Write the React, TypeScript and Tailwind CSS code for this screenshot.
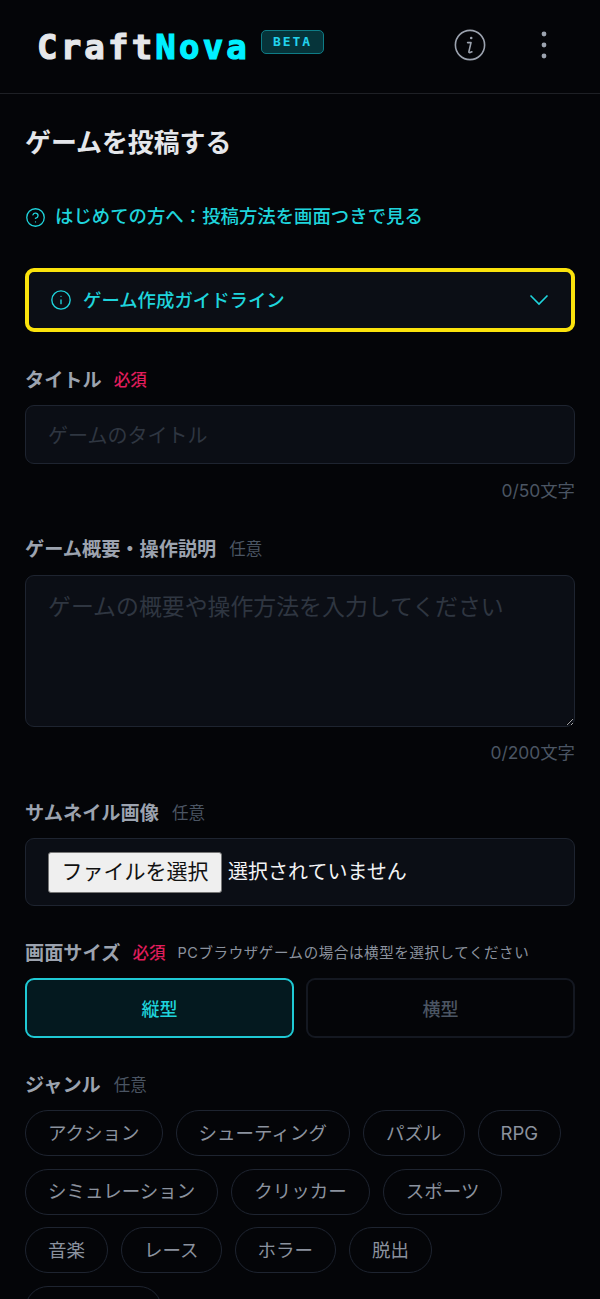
/**
 * Game submission form for CraftNova, mobile layout.
 */

import { CircleHelp, Info } from 'lucide-react';

const FONT = 'font-["Inter","Noto_Sans_CJK_JP",sans-serif]';

const GENRES = [
  'アクション',
  'シューティング',
  'パズル',
  'RPG',
  'シミュレーション',
  'クリッカー',
  'スポーツ',
  '音楽',
  'レース',
  'ホラー',
  '脱出',
  'カジュアル',
];

function FieldLabel({
  text,
  required,
  hint,
  className,
}: {
  text: string;
  required?: boolean;
  hint?: string;
  className: string;
}) {
  return (
    <div className={`flex items-center h-[26px] ${className}`}>
      <span className="text-[19.2px] font-bold text-[#9ca3af]">{text}</span>
      <span className={`text-[16.5px] ${required ? 'ml-[12px] text-[#e11d5c] font-medium' : 'ml-[13px] text-[#4b5563]'}`}>
        {required ? '必須' : '任意'}
      </span>
      {hint && <span className="ml-[12px] text-[14.5px] tracking-[0.6px] text-[#8b929e]">{hint}</span>}
    </div>
  );
}

function Counter({ text, className }: { text: string; className: string }) {
  return <div className={`h-[24px] leading-[24px] text-right text-[17.4px] text-[#4b5563] ${className}`}>{text}</div>;
}

export default function App() {
  return (
    <div className={`h-[1299px] overflow-hidden bg-[#040508] ${FONT}`}>
      {/* Header */}
      <header className="flex items-center h-[94px] border-b border-[#1e2025] pl-[37px] pr-[53px]">
        <div className="flex items-start">
          <span className='font-["DejaVu_Sans_Mono",monospace] text-[34px] leading-[36px] font-bold tracking-[3.2px] mt-[1px] [-webkit-text-stroke:1.2px_currentColor]'>
            <span className="text-[#e5e7eb]">Craft</span>
            <span className="text-[#00f0ff]">Nova</span>
          </span>
          <span className='mt-[2px] ml-[11px] flex items-center justify-center w-[63px] h-[24px] rounded-[5px] border border-[#0e7c86] bg-[#06343a] font-["DejaVu_Sans_Mono",monospace] text-[13px] font-bold tracking-[2px] text-[#22d3ee]'>
            BETA
          </span>
        </div>
        <div className="ml-auto flex items-center gap-[55px] mt-[-3px]">
          <svg width="32" height="32" viewBox="0 0 32 32" fill="none" stroke="#9ca3af" strokeWidth="1.6">
            <circle cx="16" cy="16" r="14.6" />
            <path d="M13.6 13.6 H17 L14.9 22.6 Q14.7 23.8 16 23.6 L17.9 22.8" strokeLinecap="round" strokeLinejoin="round" />
            <circle cx="17.2" cy="9" r="1.3" fill="#9ca3af" stroke="none" />
          </svg>
          <svg width="6" height="28" viewBox="0 0 6 28" fill="#9ca3af">
            <circle cx="3" cy="3" r="2.4" />
            <circle cx="3" cy="14" r="2.4" />
            <circle cx="3" cy="25" r="2.4" />
          </svg>
        </div>
      </header>

      <main className="px-[25px]">
        <h1 className="mt-[31px] h-[36px] leading-[36px] text-[25.9px] font-bold text-[#e5e7eb]">ゲームを投稿する</h1>

        {/* Guide link */}
        <a className="mt-[42px] flex items-center gap-[9px] h-[28px] text-[18.4px] font-medium text-[#1fd4dc]">
          <CircleHelp size={21} strokeWidth={1.5} />
          はじめての方へ：投稿方法を画面つきで見る
        </a>

        {/* Guidelines accordion */}
        <button className="mt-[37px] flex items-center w-full h-[64px] pl-[21px] pr-[22px] rounded-[9px] border-[4px] border-[#fbe30c] bg-[#0b0e15] text-[18.4px] font-medium text-[#1fd4dc]">
          <Info size={22} strokeWidth={1.5} />
          <span className="ml-[11px] pt-[2px]">ゲーム作成ガイドライン</span>
          <svg width="20" height="12" viewBox="0 0 20 12" fill="none" stroke="#1fd4dc" strokeWidth="1.6" className="ml-auto">
            <path d="M1.5 1.5 L10 10 L18.5 1.5" />
          </svg>
        </button>

        {/* Title */}
        <FieldLabel text="タイトル" required className="mt-[35px]" />
        <input
          placeholder="ゲームのタイトル"
          className="mt-[12px] block w-full h-[59px] px-[22px] pt-[3px] rounded-[9px] border border-[#1e2430] bg-[#0b0e15] text-[20px] placeholder-[#2f3641] outline-none"
        />
        <Counter text="0/50文字" className="mt-[15px]" />

        {/* Description */}
        <FieldLabel text="ゲーム概要・操作説明" className="mt-[33px]" />
        <textarea
          placeholder="ゲームの概要や操作方法を入力してください"
          className="mt-[13px] block w-full h-[152px] px-[22px] py-[15px] leading-[32px] rounded-[9px] border border-[#1e2430] bg-[#0b0e15] text-[22.9px] placeholder-[#2f3641] outline-none"
        />
        <Counter text="0/200文字" className="mt-[14px]" />

        {/* Thumbnail */}
        <FieldLabel text="サムネイル画像" className="mt-[35px]" />
        <div className="mt-[12px] flex items-center h-[68px] pl-[22px] rounded-[9px] border border-[#1e2430] bg-[#0b0e15]">
          <button className="flex items-center justify-center w-[174px] h-[41px] rounded-[3px] border border-[#767676] bg-[#efefef] text-[21px] text-[#111]">
            ファイルを選択
          </button>
          <span className="ml-[6px] text-[20px] text-[#f3f4f6]">選択されていません</span>
        </div>

        {/* Screen size */}
        <FieldLabel text="画面サイズ" required hint="PCブラウザゲームの場合は横型を選択してください" className="mt-[34px]" />
        <div className="mt-[12px] grid grid-cols-2 gap-[12px]">
          <button className="h-[60px] pt-[2px] rounded-[9px] border-2 border-[#1fc9d4] bg-[#04191f] text-[18px] font-medium text-[#1fd4dc]">
            縦型
          </button>
          <button className="h-[60px] pt-[2px] rounded-[9px] border-2 border-[#141821] text-[18px] font-medium text-[#4b5563]">
            横型
          </button>
        </div>

        {/* Genre */}
        <FieldLabel text="ジャンル" className="mt-[34px]" />
        <div className="mt-[12px] flex flex-wrap gap-x-[13px] gap-y-[12.5px]">
          {GENRES.map((genre) => (
            <span
              key={genre}
              className="flex items-center h-[46px] px-[22px] pt-[1px] rounded-full border border-[#1e2430] text-[18.5px] text-[#8b929e]"
            >
              {genre}
            </span>
          ))}
        </div>
      </main>
    </div>
  );
}
